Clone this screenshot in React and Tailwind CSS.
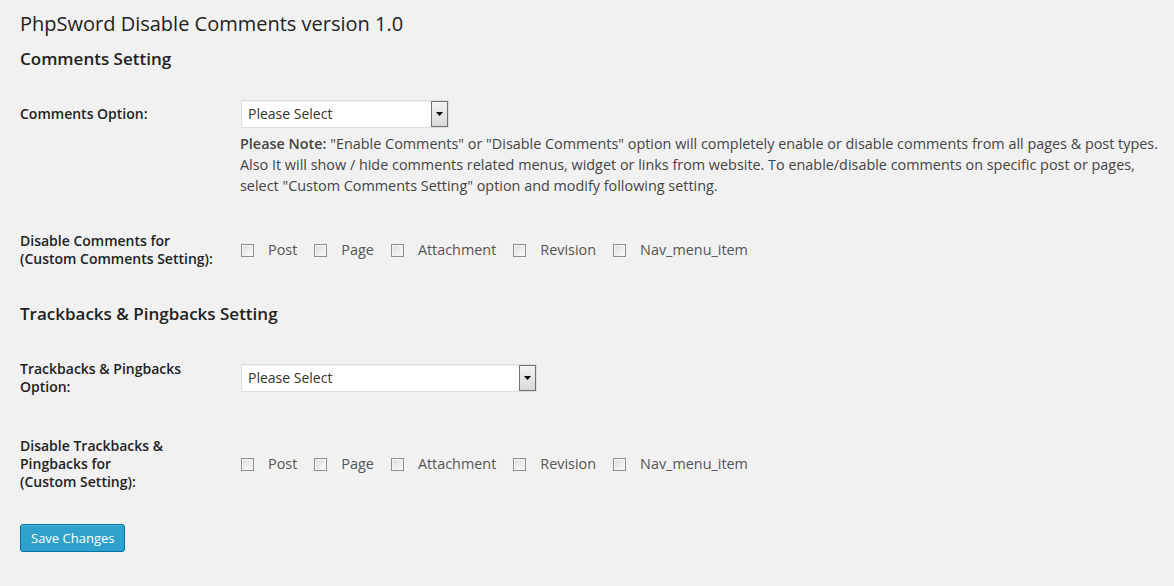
import React from 'react';

const font = { fontFamily: '"Open Sans", "Liberation Sans", sans-serif' };

function FakeSelect({ width }) {
  return (
    <div
      className={`flex items-stretch h-[28px] bg-white border border-[#dddddd] shadow-[inset_0_1px_2px_rgba(0,0,0,0.07)] ${width}`}
    >
      <span className="flex-1 pl-[6px] text-[14px] leading-[26px] text-[#333]">Please Select</span>
      <span className="w-[17px] flex items-center justify-center border border-[#707070] bg-gradient-to-b from-[#f4f4f4] to-[#d8d8d8]">
        <svg width="7" height="4" viewBox="0 0 7 4">
          <path d="M0 0 H7 L3.5 4 Z" fill="#000" />
        </svg>
      </span>
    </div>
  );
}

function Check({ label }) {
  return (
    <label className="flex items-center mr-[17px]">
      <span className="w-[13px] h-[13px] border border-[#8e8f8f] bg-gradient-to-br from-[#dcdcdc] to-[#fbfbfb] shadow-[inset_0_0_0_1px_#f4f4f4]" />
      <span className="ml-[14px] text-[14.4px] leading-[18px] text-[#555]">{label}</span>
    </label>
  );
}

const TYPES = ['Post', 'Page', 'Attachment', 'Revision', 'Nav_menu_item'];

function Checks() {
  return (
    <div className="flex items-center pl-[1px]">
      {TYPES.map((t) => (
        <Check key={t} label={t} />
      ))}
    </div>
  );
}

function Th({ children, className = '' }) {
  return (
    <div className={`w-[220px] shrink-0 pr-[20px] text-[14px] leading-[18px] font-semibold text-[#222] ${className}`}>
      {children}
    </div>
  );
}

export default function App() {
  return (
    <div className="min-h-[586px] bg-[#f1f1f1] pl-[20px] pt-[9px] pb-[20px]" style={font}>
      <h2 className="text-[20px] leading-[29px] font-normal text-[#222]">
        PhpSword Disable Comments version 1.0
      </h2>
      <h3 className="mt-[9px] text-[17px] leading-[24px] font-semibold text-[#222]">Comments Setting</h3>

      <div className="mt-[29px] flex items-start">
        <Th className="pt-[5px]">Comments Option:</Th>
        <div className="flex flex-col">
          <div className="pl-[1px]">
            <FakeSelect width="w-[208px]" />
          </div>
          <p className="mt-[5px] text-[14.4px] leading-[21px] text-[#444] whitespace-nowrap">
            <strong className="font-semibold">Please Note:</strong> "Enable Comments" or "Disable Comments" option will
            completely enable or disable comments from all pages &amp; post types.
            <br />
            Also It will show / hide comments related menus, widget or links from website. To enable/disable comments
            on specific post or pages,
            <br />
            select "Custom Comments Setting" option and modify following setting.
          </p>
        </div>
      </div>

      <div className="mt-[36px] flex items-center">
        <Th>
          Disable Comments for
          <br />
          (Custom Comments Setting):
        </Th>
        <Checks />
      </div>

      <h3 className="mt-[34px] text-[17px] leading-[24px] font-semibold text-[#222]">
        Trackbacks &amp; Pingbacks Setting
      </h3>

      <div className="mt-[34px] flex items-center">
        <Th>
          Trackbacks &amp; Pingbacks
          <br />
          Option:
        </Th>
        <div className="pl-[1px]">
          <FakeSelect width="w-[296px]" />
        </div>
      </div>

      <div className="mt-[41px] flex items-center">
        <Th>
          Disable Trackbacks &amp;
          <br />
          Pingbacks for
          <br />
          (Custom Setting):
        </Th>
        <Checks />
      </div>

      <button className="mt-[33px] h-[28px] px-[10px] rounded-[3px] border border-[#0074a2] bg-[#2ea2cc] text-[13px] leading-[26px] text-white shadow-[inset_0_1px_0_rgba(120,200,230,0.5)]">
        Save Changes
      </button>
    </div>
  );
}
